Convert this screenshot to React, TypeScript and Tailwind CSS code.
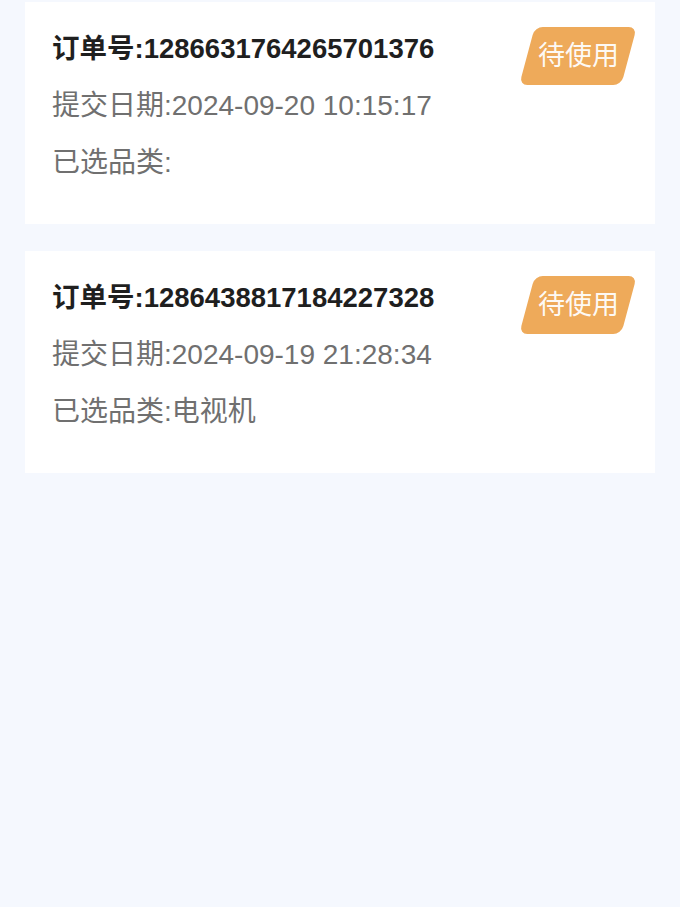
import React from 'react'

interface Order {
  id: string
  date: string
  category: string
  status: string
}

const orders: Order[] = [
  { id: '1286631764265701376', date: '2024-09-20 10:15:17', category: '', status: '待使用' },
  { id: '1286438817184227328', date: '2024-09-19 21:28:34', category: '电视机', status: '待使用' },
]

const font = { fontFamily: '"Liberation Sans", "Noto Sans CJK SC", sans-serif' }

const OrderCard = ({ order }: { order: Order }) => (
  <div className="relative bg-white px-[27px] pt-[18px] pb-[33px]">
    <div className="text-[27.5px] leading-[57px] font-bold text-[#1f1f1f]">订单号:{order.id}</div>
    <div className="text-[28px] leading-[57px] text-[#707070]">提交日期:{order.date}</div>
    <div className="text-[28px] leading-[57px] text-[#707070]">已选品类:{order.category}</div>

    {/* status badge */}
    <div className="absolute right-[26px] top-[25px] w-[102px] h-[58px] -skew-x-[15deg] rounded-[8px] bg-[#eeaa5a] flex items-center justify-center">
      <span className="skew-x-[15deg] text-[27px] text-white/95">{order.status}</span>
    </div>
  </div>
)

export default function App() {
  return (
    <div className="min-h-[907px] bg-[#f5f8fe] px-[25px] pt-[2px] flex flex-col gap-[27px]" style={font}>
      {orders.map(o => (
        <OrderCard key={o.id} order={o} />
      ))}
    </div>
  )
}
